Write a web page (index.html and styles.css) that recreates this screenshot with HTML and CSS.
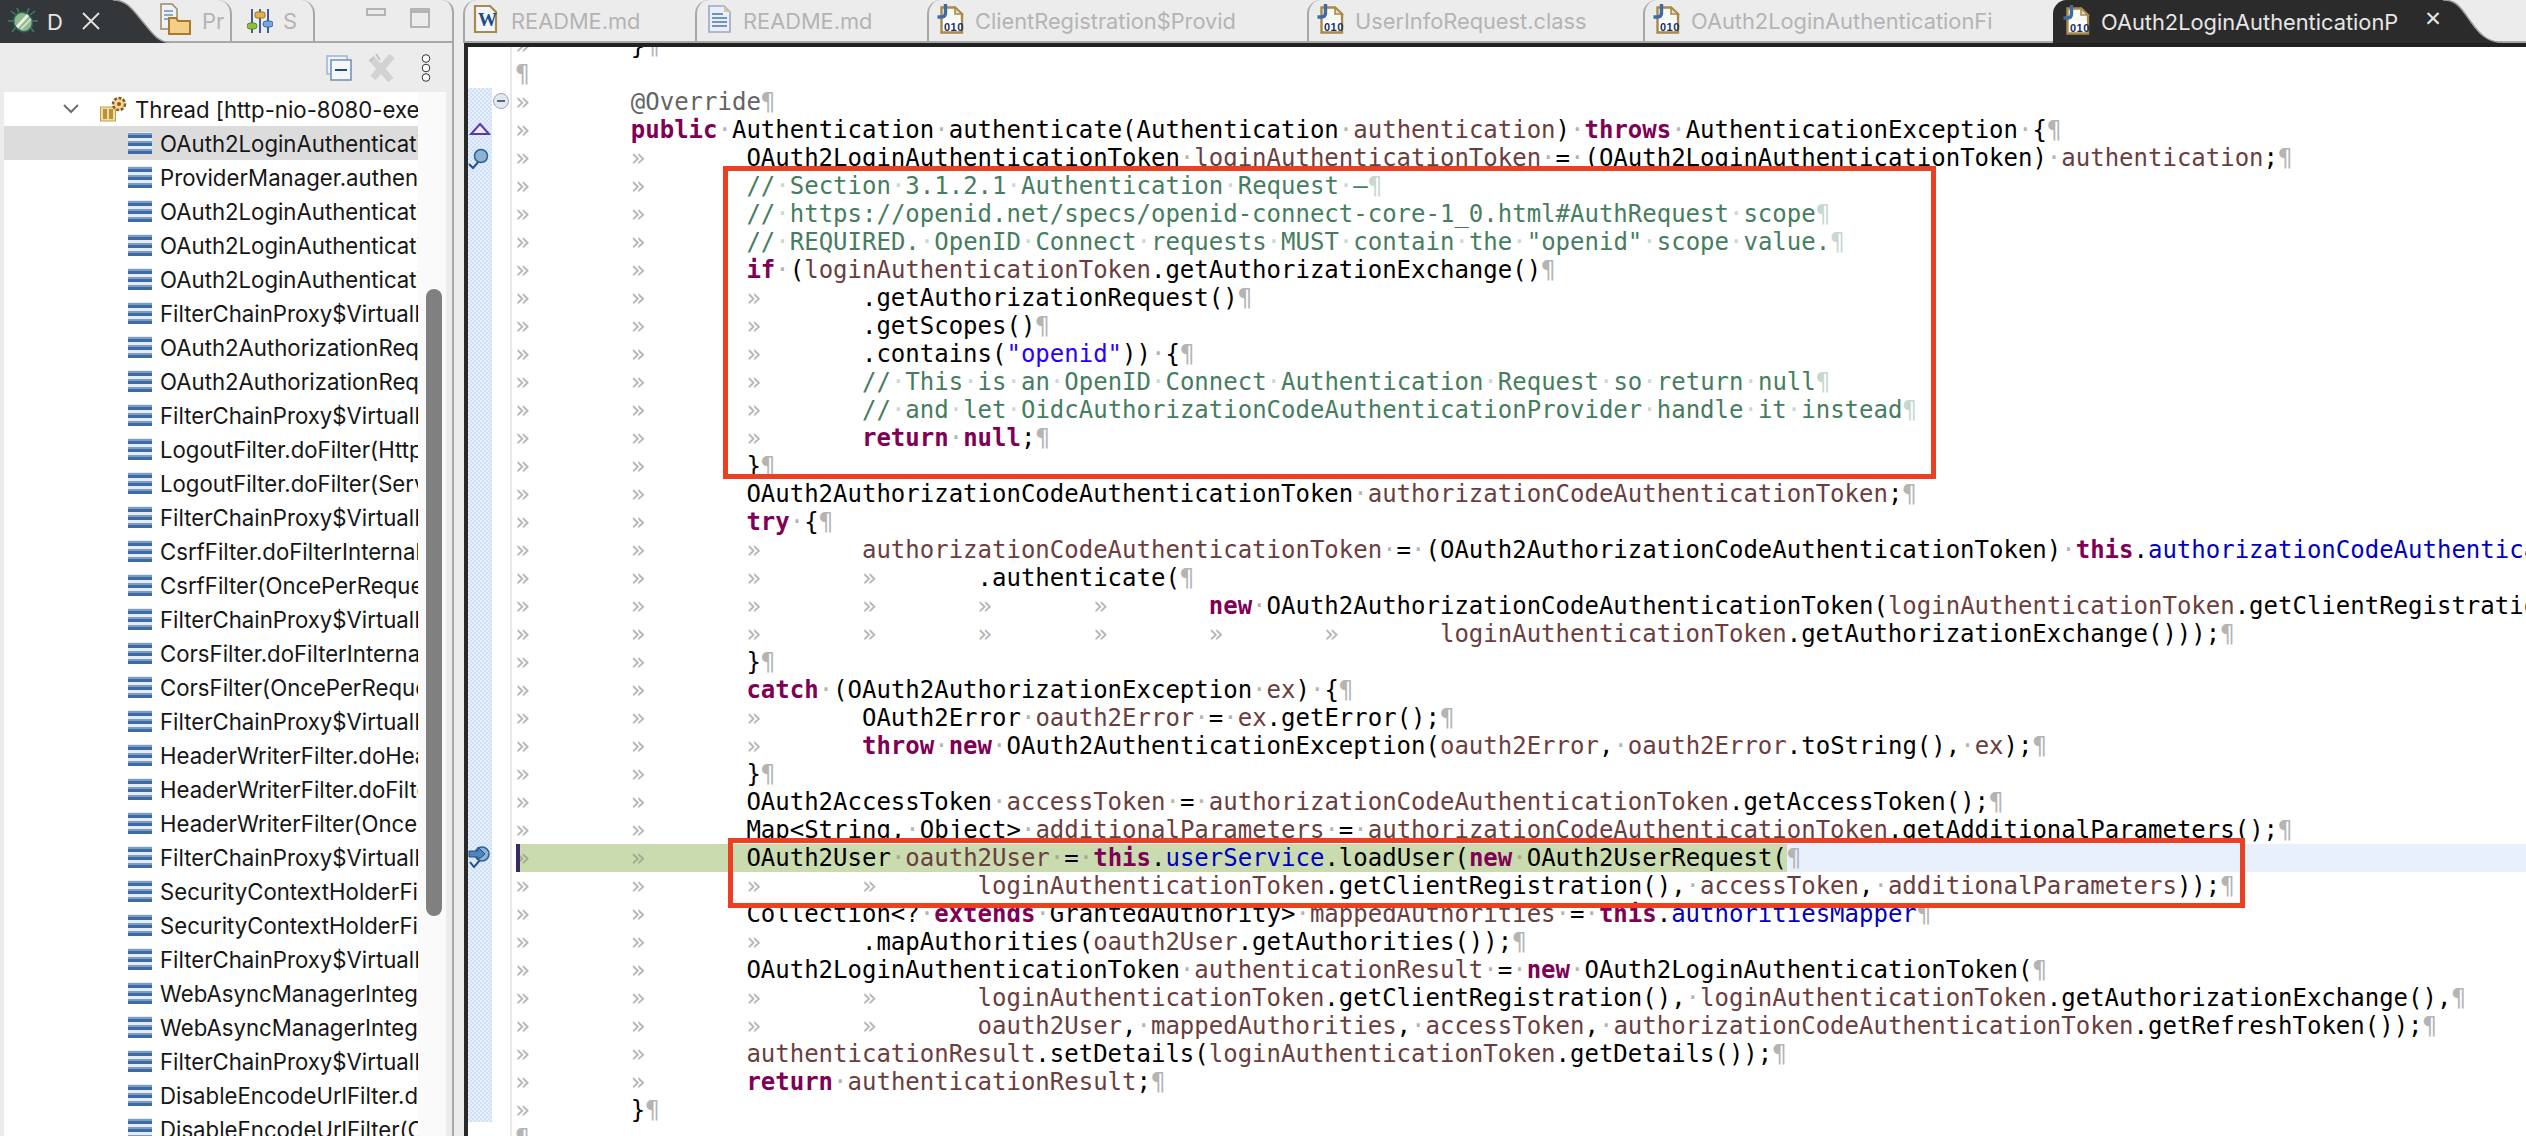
FILE: index.html
```html
<!DOCTYPE html>
<html lang="en">
<head>
<meta charset="utf-8">
<title>Eclipse Debug</title>
<link rel="stylesheet" href="styles.css">
</head>
<body>
<svg class="defs" width="0" height="0">
  <symbol id="stack" viewBox="0 0 24 22">
    <rect y="0" width="24" height="22" fill="#e6ecf4"/>
    <rect y="1" width="24" height="2" fill="#7d9cc4"/><rect y="3" width="24" height="3" fill="#3f6ba5"/>
    <rect y="9" width="24" height="2" fill="#7d9cc4"/><rect y="11" width="24" height="3" fill="#3f6ba5"/>
    <rect y="17" width="24" height="2" fill="#7d9cc4"/><rect y="19" width="24" height="3" fill="#3f6ba5"/>
  </symbol>
  <symbol id="classfile" viewBox="0 0 30 30">
    <path d="M4.5 3.5H18L25 10V28.5H4.5Z" fill="#f8f8f4" stroke="#a98a4b" stroke-width="2.4"/>
    <path d="M18 3.5V10H25Z" fill="#e8dcc0" stroke="#a98a4b" stroke-width="1.6"/>
    <rect x="6" y="16" width="18" height="11" fill="#fff"/>
    <text x="7" y="26.5" class="bin">010</text>
    <path d="M8.5 0V9Q8.5 13 4.500 13H0.500" fill="none" stroke="#3f6ba5" stroke-width="3.400"/>
  </symbol>
</svg>
<div class="app">
  <section class="left">
    <div class="ltabs">
      <div class="dtab">
        <svg class="bug" width="30" height="30" viewBox="0 0 30 30"><g stroke="#3f7a6c" stroke-width="1.600" fill="none"><path d="M8 9 3 5M6 15H0M8 21 4 26M22 9 27 5M24 15H30M22 21 26 26M11 7 9 2M19 7 21 2"/></g><ellipse cx="15" cy="16" rx="9" ry="10" transform="rotate(-35 15 16)" fill="#8fb98c" stroke="#2f6658" stroke-width="1.500"/><path d="M9 21 20 9" stroke="#e8f0e2" stroke-width="3"/><path d="M13 23 23 13" stroke="#cfe0c4" stroke-width="2"/></svg>
        <span class="dlabel">D</span>
        <svg class="x" width="18" height="18" viewBox="0 0 18 18"><path d="M1 1 17 17M17 1 1 17" stroke="#e4e4e4" stroke-width="1.800"/></svg>
      </div>
      <svg class="dcurve" width="57" height="43" viewBox="0 0 57 43"><path d="M0 0C14 0 20 10 30 22S44 41 57 43H0Z" fill="#34373a"/><path d="M0 0C14 0 20 10 30 22S44 41 57 43" fill="none" stroke="#9c9c9c" stroke-width="1.500"/></svg>
      <div class="ltab pr">
        <svg width="32" height="32" viewBox="0 0 32 32"><path d="M1 1H12L17 6V26H1Z" fill="#eef2f8" stroke="#9a8a60" stroke-width="1.500"/><path d="M4 8H13M4 12H13M4 16H10" stroke="#6f8fbf" stroke-width="1.500"/><path d="M9 15H16L18 18H30V31H9Z" fill="#f4cf86" stroke="#a87b2c" stroke-width="2"/></svg>
        <span class="inactive">Pr</span>
      </div>
      <div class="ltab st">
        <svg width="26" height="24" viewBox="0 0 26 24"><path d="M5 0V24M13 0V24M21 0V24" stroke="#3f5d96" stroke-width="2"/><rect x="0" y="14" width="10" height="6" rx="3" fill="#8fbf3f" stroke="#5e8a2a"/><rect x="8" y="3" width="10" height="6" rx="2" fill="#e4b04a" stroke="#a5761e"/><rect x="16" y="12" width="10" height="6" rx="3" fill="#7aa7dc" stroke="#3f6ba5"/></svg>
        <span class="inactive">S</span>
      </div>
      <div class="wincontrols">
        <span class="minbox"></span>
        <span class="maxbox"></span>
      </div>
    </div>
    <div class="ltools">
      <svg class="tool-a" width="26" height="26" viewBox="0 0 26 26"><rect x="1" y="1" width="20" height="18" fill="#eef3fa" stroke="#9cb4d4" stroke-width="1.500"/><rect x="5" y="5" width="20" height="20" fill="#f4f7fb" stroke="#6f8eb5" stroke-width="1.500"/><path d="M9 15H21" stroke="#1f4c85" stroke-width="2"/></svg>
      <svg class="tool-b" width="30" height="32" viewBox="0 0 30 32"><path d="M3 6 23 28M24 4 5 26" stroke="#d2d2d2" stroke-width="7"/><path d="M8 2 12 8M2 9 6 6" stroke="#bcbcbc" stroke-width="1.500"/></svg>
      <svg class="dots" width="10" height="28" viewBox="0 0 10 28"><g fill="#fff" stroke="#333" stroke-width="1"><circle cx="5" cy="4.500" r="3.800"/><circle cx="5" cy="14" r="3.800"/><circle cx="5" cy="23.500" r="3.800"/></g></svg>
    </div>
    <div class="treewrap">
      <div class="tree">
        <div class="row thread">
          <svg class="chev" width="16" height="10" viewBox="0 0 16 10"><path d="M1 1 8 8 15 1" fill="none" stroke="#6f6f6f" stroke-width="2"/></svg>
          <svg class="thr" width="28" height="26" viewBox="0 0 28 26"><rect x="0.500" y="11" width="15" height="14" fill="#f1dc9e" stroke="#c4a24a"/><rect x="3" y="13" width="4" height="10" fill="#b8923a"/><rect x="9" y="13" width="4" height="10" fill="#b8923a"/><circle cx="19" cy="8" r="6" fill="#f6d693" stroke="#8a5a1e" stroke-width="2.500" stroke-dasharray="3 1.500"/><circle cx="19" cy="8" r="2" fill="#8a5a1e"/></svg>
          <span class="label">Thread [http-nio-8080-exec-2] (Suspended)</span>
        </div>
        <div class="row frame sel"><svg class="si"><use href="#stack"/></svg><span class="label">OAuth2LoginAuthenticationProvider.authenticate</span></div>
        <div class="row frame"><svg class="si"><use href="#stack"/></svg><span class="label">ProviderManager.authenticate(Authentication)</span></div>
        <div class="row frame"><svg class="si"><use href="#stack"/></svg><span class="label">OAuth2LoginAuthenticationFilter.attempt</span></div>
        <div class="row frame"><svg class="si"><use href="#stack"/></svg><span class="label">OAuth2LoginAuthenticationFilter.doFilter</span></div>
        <div class="row frame"><svg class="si"><use href="#stack"/></svg><span class="label">OAuth2LoginAuthenticationFilter.doFilter</span></div>
        <div class="row frame"><svg class="si"><use href="#stack"/></svg><span class="label">FilterChainProxy$VirtualFilterChain.doFilter</span></div>
        <div class="row frame"><svg class="si"><use href="#stack"/></svg><span class="label">OAuth2AuthorizationRequestRedirectFilter</span></div>
        <div class="row frame"><svg class="si"><use href="#stack"/></svg><span class="label">OAuth2AuthorizationRequestRedirectFilter</span></div>
        <div class="row frame"><svg class="si"><use href="#stack"/></svg><span class="label">FilterChainProxy$VirtualFilterChain.doFilter</span></div>
        <div class="row frame"><svg class="si"><use href="#stack"/></svg><span class="label">LogoutFilter.doFilter(HttpServletRequest)</span></div>
        <div class="row frame"><svg class="si"><use href="#stack"/></svg><span class="label">LogoutFilter.doFilter(ServletRequest)</span></div>
        <div class="row frame"><svg class="si"><use href="#stack"/></svg><span class="label">FilterChainProxy$VirtualFilterChain.doFilter</span></div>
        <div class="row frame"><svg class="si"><use href="#stack"/></svg><span class="label">CsrfFilter.doFilterInternal(HttpServletRequest)</span></div>
        <div class="row frame"><svg class="si"><use href="#stack"/></svg><span class="label">CsrfFilter(OncePerRequestFilter).doFilter</span></div>
        <div class="row frame"><svg class="si"><use href="#stack"/></svg><span class="label">FilterChainProxy$VirtualFilterChain.doFilter</span></div>
        <div class="row frame"><svg class="si"><use href="#stack"/></svg><span class="label">CorsFilter.doFilterInternal(HttpServletRequest)</span></div>
        <div class="row frame"><svg class="si"><use href="#stack"/></svg><span class="label">CorsFilter(OncePerRequestFilter).doFilter</span></div>
        <div class="row frame"><svg class="si"><use href="#stack"/></svg><span class="label">FilterChainProxy$VirtualFilterChain.doFilter</span></div>
        <div class="row frame"><svg class="si"><use href="#stack"/></svg><span class="label">HeaderWriterFilter.doHeadersAfter</span></div>
        <div class="row frame"><svg class="si"><use href="#stack"/></svg><span class="label">HeaderWriterFilter.doFilterInternal</span></div>
        <div class="row frame"><svg class="si"><use href="#stack"/></svg><span class="label">HeaderWriterFilter(OncePerRequestFilter)</span></div>
        <div class="row frame"><svg class="si"><use href="#stack"/></svg><span class="label">FilterChainProxy$VirtualFilterChain.doFilter</span></div>
        <div class="row frame"><svg class="si"><use href="#stack"/></svg><span class="label">SecurityContextHolderFilter.doFilter</span></div>
        <div class="row frame"><svg class="si"><use href="#stack"/></svg><span class="label">SecurityContextHolderFilter.doFilter</span></div>
        <div class="row frame"><svg class="si"><use href="#stack"/></svg><span class="label">FilterChainProxy$VirtualFilterChain.doFilter</span></div>
        <div class="row frame"><svg class="si"><use href="#stack"/></svg><span class="label">WebAsyncManagerIntegrationFilter.doFilter</span></div>
        <div class="row frame"><svg class="si"><use href="#stack"/></svg><span class="label">WebAsyncManagerIntegrationFilter(Once)</span></div>
        <div class="row frame"><svg class="si"><use href="#stack"/></svg><span class="label">FilterChainProxy$VirtualFilterChain.doFilter</span></div>
        <div class="row frame"><svg class="si"><use href="#stack"/></svg><span class="label">DisableEncodeUrlFilter.doFilterInternal</span></div>
        <div class="row frame"><svg class="si"><use href="#stack"/></svg><span class="label">DisableEncodeUrlFilter(OncePerRequestFilter)</span></div>
      </div>
      <div class="track"><div class="thumb"></div></div>
    </div>
  </section>

  <section class="right">
    <div class="etabs">
      <div class="etab w232"><svg class="ti" viewBox="0 0 30 30"><path d="M2 2H17L23 8V28H2Z" fill="#f2f6fc" stroke="#a98a4b" stroke-width="2.200"/><text x="5" y="22" class="wglyph">W</text></svg><span class="inactive">README.md</span></div>
      <div class="etab w232"><svg class="ti" viewBox="0 0 30 30"><path d="M4 2H19L25 8V28H4Z" fill="#eaf0f9" stroke="#9aa8c4" stroke-width="1.600"/><path d="M19 2V8H25Z" fill="#dcc68e"/><path d="M7 10H18M7 14H22M7 18H22M7 22H22" stroke="#4f73b0" stroke-width="1.600"/></svg><span class="inactive">README.md</span></div>
      <div class="etab w380"><svg class="ti"><use href="#classfile"/></svg><span class="inactive">ClientRegistration$Provid</span></div>
      <div class="etab w336"><svg class="ti"><use href="#classfile"/></svg><span class="inactive">UserInfoRequest.class</span></div>
      <div class="etab w410"><svg class="ti"><use href="#classfile"/></svg><span class="inactive">OAuth2LoginAuthenticationFi</span></div>
      <div class="etab active"><svg class="ti"><use href="#classfile"/></svg><span class="activelabel">OAuth2LoginAuthenticationP</span><span class="closex">✕</span></div>
      <svg class="acurve" width="60" height="43" viewBox="0 0 60 43"><path d="M0 0C14 0 18 8 28 22S44 41 60 43H0Z" fill="#2b2b2b"/><path d="M0 0C14 0 18 8 28 22S44 41 60 43" fill="none" stroke="#9c9c9c" stroke-width="1.500"/></svg>
    </div>
    <div class="editor">
      <div class="ruler">
        <svg class="ann1" width="22" height="14" viewBox="0 0 22 14"><path d="M11 2 20 12H2Z" fill="#eee9f7" stroke="#5a3aa8" stroke-width="2"/></svg>
        <svg class="ann2" width="22" height="22" viewBox="0 0 22 22"><path d="M1 16 5 20 12 12" fill="none" stroke="#20508c" stroke-width="2"/><circle cx="13" cy="8" r="6.500" fill="#8fb3d4" stroke="#2f5f8f" stroke-width="1.500"/></svg>
        <svg class="ann3" width="24" height="24" viewBox="0 0 24 24"><path d="M2 17 6 22 13 14" fill="none" stroke="#20508c" stroke-width="2"/><circle cx="14" cy="9" r="7" fill="#8fb3d4" stroke="#2f5f8f" stroke-width="1.500"/><path d="M1 6H10V2L17 9 10 15V12H1Z" fill="#4f84bd" stroke="#20508c"/></svg>
      </div>
      <div class="fold"><span class="foldbtn"></span></div>
      <div class="code">
<div class="ln"><i class="t">»</i>}<i>¶</i></div>
<div class="ln"><i>¶</i></div>
<div class="ln"><i class="t">»</i><span class="a">@Override</span><i>¶</i></div>
<div class="ln"><i class="t">»</i><b>public</b><i>·</i>Authentication<i>·</i>authenticate(Authentication<i>·</i><span class="v">authentication</span>)<i>·</i><b>throws</b><i>·</i>AuthenticationException<i>·</i>{<i>¶</i></div>
<div class="ln"><i class="t">»</i><i class="t">»</i>OAuth2LoginAuthenticationToken<i>·</i><span class="v">loginAuthenticationToken</span><i>·</i>=<i>·</i>(OAuth2LoginAuthenticationToken)<i>·</i><span class="v">authentication</span>;<i>¶</i></div>
<div class="ln"><i class="t">»</i><i class="t">»</i><span class="c">//<i>·</i>Section<i>·</i>3.1.2.1<i>·</i>Authentication<i>·</i>Request<i>·</i>–<i>¶</i></span></div>
<div class="ln"><i class="t">»</i><i class="t">»</i><span class="c">//<i>·</i>https://openid.net/specs/openid-connect-core-1_0.html#AuthRequest<i>·</i>scope<i>¶</i></span></div>
<div class="ln"><i class="t">»</i><i class="t">»</i><span class="c">//<i>·</i>REQUIRED.<i>·</i>OpenID<i>·</i>Connect<i>·</i>requests<i>·</i>MUST<i>·</i>contain<i>·</i>the<i>·</i>"openid"<i>·</i>scope<i>·</i>value.<i>¶</i></span></div>
<div class="ln"><i class="t">»</i><i class="t">»</i><b>if</b><i>·</i>(<span class="v">loginAuthenticationToken</span>.getAuthorizationExchange()<i>¶</i></div>
<div class="ln"><i class="t">»</i><i class="t">»</i><i class="t">»</i>.getAuthorizationRequest()<i>¶</i></div>
<div class="ln"><i class="t">»</i><i class="t">»</i><i class="t">»</i>.getScopes()<i>¶</i></div>
<div class="ln"><i class="t">»</i><i class="t">»</i><i class="t">»</i>.contains(<span class="s">"openid"</span>))<i>·</i>{<i>¶</i></div>
<div class="ln"><i class="t">»</i><i class="t">»</i><i class="t">»</i><span class="c">//<i>·</i>This<i>·</i>is<i>·</i>an<i>·</i>OpenID<i>·</i>Connect<i>·</i>Authentication<i>·</i>Request<i>·</i>so<i>·</i>return<i>·</i>null<i>¶</i></span></div>
<div class="ln"><i class="t">»</i><i class="t">»</i><i class="t">»</i><span class="c">//<i>·</i>and<i>·</i>let<i>·</i>OidcAuthorizationCodeAuthenticationProvider<i>·</i>handle<i>·</i>it<i>·</i>instead<i>¶</i></span></div>
<div class="ln"><i class="t">»</i><i class="t">»</i><i class="t">»</i><b>return</b><i>·</i><b>null</b>;<i>¶</i></div>
<div class="ln"><i class="t">»</i><i class="t">»</i>}<i>¶</i></div>
<div class="ln"><i class="t">»</i><i class="t">»</i>OAuth2AuthorizationCodeAuthenticationToken<i>·</i><span class="v">authorizationCodeAuthenticationToken</span>;<i>¶</i></div>
<div class="ln"><i class="t">»</i><i class="t">»</i><b>try</b><i>·</i>{<i>¶</i></div>
<div class="ln"><i class="t">»</i><i class="t">»</i><i class="t">»</i><span class="v">authorizationCodeAuthenticationToken</span><i>·</i>=<i>·</i>(OAuth2AuthorizationCodeAuthenticationToken)<i>·</i><b>this</b>.<span class="f">authorizationCodeAuthenticationProvider</span></div>
<div class="ln"><i class="t">»</i><i class="t">»</i><i class="t">»</i><i class="t">»</i>.authenticate(<i>¶</i></div>
<div class="ln"><i class="t">»</i><i class="t">»</i><i class="t">»</i><i class="t">»</i><i class="t">»</i><i class="t">»</i><b>new</b><i>·</i>OAuth2AuthorizationCodeAuthenticationToken(<span class="v">loginAuthenticationToken</span>.getClientRegistration(),</div>
<div class="ln"><i class="t">»</i><i class="t">»</i><i class="t">»</i><i class="t">»</i><i class="t">»</i><i class="t">»</i><i class="t">»</i><i class="t">»</i><span class="v">loginAuthenticationToken</span>.getAuthorizationExchange()));<i>¶</i></div>
<div class="ln"><i class="t">»</i><i class="t">»</i>}<i>¶</i></div>
<div class="ln"><i class="t">»</i><i class="t">»</i><b>catch</b><i>·</i>(OAuth2AuthorizationException<i>·</i><span class="v">ex</span>)<i>·</i>{<i>¶</i></div>
<div class="ln"><i class="t">»</i><i class="t">»</i><i class="t">»</i>OAuth2Error<i>·</i><span class="v">oauth2Error</span><i>·</i>=<i>·</i><span class="v">ex</span>.getError();<i>¶</i></div>
<div class="ln"><i class="t">»</i><i class="t">»</i><i class="t">»</i><b>throw</b><i>·</i><b>new</b><i>·</i>OAuth2AuthenticationException(<span class="v">oauth2Error</span>,<i>·</i><span class="v">oauth2Error</span>.toString(),<i>·</i><span class="v">ex</span>);<i>¶</i></div>
<div class="ln"><i class="t">»</i><i class="t">»</i>}<i>¶</i></div>
<div class="ln"><i class="t">»</i><i class="t">»</i>OAuth2AccessToken<i>·</i><span class="v">accessToken</span><i>·</i>=<i>·</i><span class="v">authorizationCodeAuthenticationToken</span>.getAccessToken();<i>¶</i></div>
<div class="ln"><i class="t">»</i><i class="t">»</i>Map&lt;String,<i>·</i>Object&gt;<i>·</i><span class="v">additionalParameters</span><i>·</i>=<i>·</i><span class="v">authorizationCodeAuthenticationToken</span>.getAdditionalParameters();<i>¶</i></div>
<div class="ln hl"><span class="green"><i class="t">»</i><i class="t">»</i>OAuth2User<i>·</i><span class="v">oauth2User</span><i>·</i>=<i>·</i><b>this</b>.<span class="f">userService</span>.loadUser(<b>new</b><i>·</i>OAuth2UserRequest(</span><i>¶</i></div>
<div class="ln"><i class="t">»</i><i class="t">»</i><i class="t">»</i><i class="t">»</i><span class="v">loginAuthenticationToken</span>.getClientRegistration(),<i>·</i><span class="v">accessToken</span>,<i>·</i><span class="v">additionalParameters</span>));<i>¶</i></div>
<div class="ln"><i class="t">»</i><i class="t">»</i>Collection&lt;?<i>·</i><b>extends</b><i>·</i>GrantedAuthority&gt;<i>·</i><span class="v">mappedAuthorities</span><i>·</i>=<i>·</i><b>this</b>.<span class="f">authoritiesMapper</span><i>¶</i></div>
<div class="ln"><i class="t">»</i><i class="t">»</i><i class="t">»</i>.mapAuthorities(<span class="v">oauth2User</span>.getAuthorities());<i>¶</i></div>
<div class="ln"><i class="t">»</i><i class="t">»</i>OAuth2LoginAuthenticationToken<i>·</i><span class="v">authenticationResult</span><i>·</i>=<i>·</i><b>new</b><i>·</i>OAuth2LoginAuthenticationToken(<i>¶</i></div>
<div class="ln"><i class="t">»</i><i class="t">»</i><i class="t">»</i><i class="t">»</i><span class="v">loginAuthenticationToken</span>.getClientRegistration(),<i>·</i><span class="v">loginAuthenticationToken</span>.getAuthorizationExchange(),<i>¶</i></div>
<div class="ln"><i class="t">»</i><i class="t">»</i><i class="t">»</i><i class="t">»</i><span class="v">oauth2User</span>,<i>·</i><span class="v">mappedAuthorities</span>,<i>·</i><span class="v">accessToken</span>,<i>·</i><span class="v">authorizationCodeAuthenticationToken</span>.getRefreshToken());<i>¶</i></div>
<div class="ln"><i class="t">»</i><i class="t">»</i><span class="v">authenticationResult</span>.setDetails(<span class="v">loginAuthenticationToken</span>.getDetails());<i>¶</i></div>
<div class="ln"><i class="t">»</i><i class="t">»</i><b>return</b><i>·</i><span class="v">authenticationResult</span>;<i>¶</i></div>
<div class="ln"><i class="t">»</i>}<i>¶</i></div>
<div class="ln"><i>¶</i></div>
      </div>
      <div class="redbox box1"></div>
      <div class="redbox box2"></div>
    </div>
  </section>
</div>
</body>
</html>
```
FILE: styles.css
```css
* { box-sizing: border-box; }
html, body { margin: 0; padding: 0; height: 100%; overflow: hidden; }
body { background: #ececec; font-family: Inter, "Noto Sans", sans-serif; }
.defs { position: absolute; }
.bin { font: bold 11px "Liberation Sans", sans-serif; fill: #16306a; letter-spacing: 0.5px; }
.wglyph { font: bold 19px "Liberation Serif", serif; fill: #1f4c85; }

.app { display: flex; width: 2526px; height: 1136px; overflow: hidden; background: #ececec; }

/* left pane */
.left { width: 454px; flex: none; display: flex; flex-direction: column; border-right: 2px solid #a8a8a8; border-top-right-radius: 12px; }
.ltabs { height: 43px; flex: none; display: flex; border-bottom: 2px solid #a8a8a8; font-size: 22px; }
.dtab { width: 113px; height: 43px; flex: none; display: flex; align-items: center; background: #34373a; padding-left: 8px; color: #e6e6e6; }
.bug { flex: none; margin-top: -2px; }
.dlabel { margin-left: 9px; width: 35px; }
.dcurve { flex: none; margin-right: -10px; }
.x { flex: none; margin-top: -2px; }
.ltab { display: flex; align-items: center; gap: 10px; height: 41px; flex: none; border-right: 2px solid #a8a8a8; border-top-right-radius: 14px; }
.ltab.pr { width: 72px; position: relative; }
.ltab.st { width: 83px; padding-left: 15px; }
.ltab.pr svg { margin-top: -4px; flex: none; }
.inactive { color: #b4b4b4; white-space: nowrap; }
.wincontrols { display: flex; gap: 24px; padding: 8px 0 0 51px; }
.minbox { width: 20px; height: 8px; border: 2px solid #b4b4b4; }
.maxbox { width: 20px; height: 20px; border: 2px solid #b4b4b4; border-top-width: 5px; }

.ltools { height: 49px; flex: none; display: flex; align-items: center; justify-content: flex-end; padding-right: 21px; }
.tool-b { margin: 0 23px 0 16px; }

.treewrap { flex: 1; display: flex; min-height: 0; padding-left: 4px; padding-right: 6px; }
.tree { width: 414px; flex: none; background: #fff; overflow: hidden; }
.row { height: 34px; display: flex; align-items: center; font-size: 22.2px; color: #161616; white-space: nowrap; }
.row.frame { padding-left: 124px; }
.row.thread { padding-left: 59px; }
.row.sel { background: #dcdcdc; }
.chev { flex: none; margin-right: 21px; }
.thr { flex: none; margin-right: 7px; }
.si { width: 24px; height: 22px; flex: none; margin-right: 8px; }
.label { display: block; white-space: nowrap; }
.track { width: 28px; flex: none; background: #fafafa; padding: 197px 4px 0 8px; }
.thumb { width: 16px; height: 627px; border-radius: 8px; background: #808080; }

/* right pane */
.right { flex: 1; min-width: 0; margin-left: 9px; display: flex; flex-direction: column; }
.etabs { height: 43px; flex: none; display: flex; border-bottom: 2px solid #a8a8a8; font-size: 21.8px; }
.etab { height: 41px; flex: none; display: flex; align-items: center; padding-left: 8px; gap: 8px; border-left: 2px solid #a8a8a8; border-top-left-radius: 14px; overflow: hidden; }
.w232 { width: 232px; }
.w380 { width: 380px; }
.w336 { width: 336px; }
.w410 { width: 410px; }
.etab.active { width: 390px; height: 43px; background: #2b2b2b; border-left-color: #2b2b2b; overflow: visible; position: relative; z-index: 1; }
.ti { width: 30px; height: 30px; flex: none; margin-top: -3px; overflow: visible; }
.activelabel { color: #e6e6e6; white-space: nowrap; }
.closex { flex: none; width: 20px; margin-left: 18px; margin-top: -4px; color: #e4e4e4; font: 21px/1 "DejaVu Sans", sans-serif; }
.acurve { flex: none; }

.editor { flex: 1; min-height: 0; position: relative; display: flex; margin-left: 1px; border-top: 4px solid #222; border-left: 4px solid #2a2a2a; background: #fff; overflow: hidden; }
.ruler { width: 24px; flex: none; position: relative; height: 1034px; margin-top: 41px; background: repeating-conic-gradient(#cfe0f8 0 25%, #e6effc 0 50%) 0 0 / 4px 4px; }
.ann1 { position: absolute; left: 1px; top: 34px; }
.ann2 { position: absolute; left: 0; top: 60px; }
.ann3 { position: absolute; left: 0; top: 757px; }
.fold { width: 20px; flex: none; border-right: 2px solid #e8e8e8; padding: 46px 0 0 1px; }
.foldbtn { display: block; width: 16px; height: 16px; border-radius: 50%; background: #e4e8ee; border: 1px solid #9aa6b8; position: relative; }
.foldbtn::after { content: ""; position: absolute; left: 3px; top: 6px; width: 8px; height: 2px; background: #59667a; }

.code { flex: 1; min-width: 0; margin-top: -15px; padding-left: 3.2px; font: 24px/28px "DejaVu Sans Mono", monospace; color: #000; overflow: hidden; }
.ln { height: 28px; white-space: pre; }
.code i { font-style: normal; color: #b4b4b4; }
.code i.t { display: inline-block; width: 8ch; }
.code b { color: #7f0055; font-weight: bold; }
.code .a { color: #646464; }
.code .v { color: #6a3e3e; }
.code .f { color: #0000c0; }
.code .s { color: #2a00ff; }
.code .c { color: #467d60; }
.code .c i { color: #c8d8d0; }
.hl { position: relative; background: #e8f0fb; }
.hl::before { content: ""; position: absolute; left: 0.8px; top: 0; width: 4px; height: 28px; background: #3a2a5e; box-shadow: -1px 0 0 #fff; z-index: 1; }
.green { display: inline-block; height: 28px; background: #cbdbb0; }
.code .green i { color: #9fac8c; }

.redbox { position: absolute; border: 5px solid #ec4023; }
.box1 { left: 255px; top: 119px; width: 1213px; height: 313px; }
.box2 { left: 260px; top: 791px; width: 1517px; height: 70px; }
```
